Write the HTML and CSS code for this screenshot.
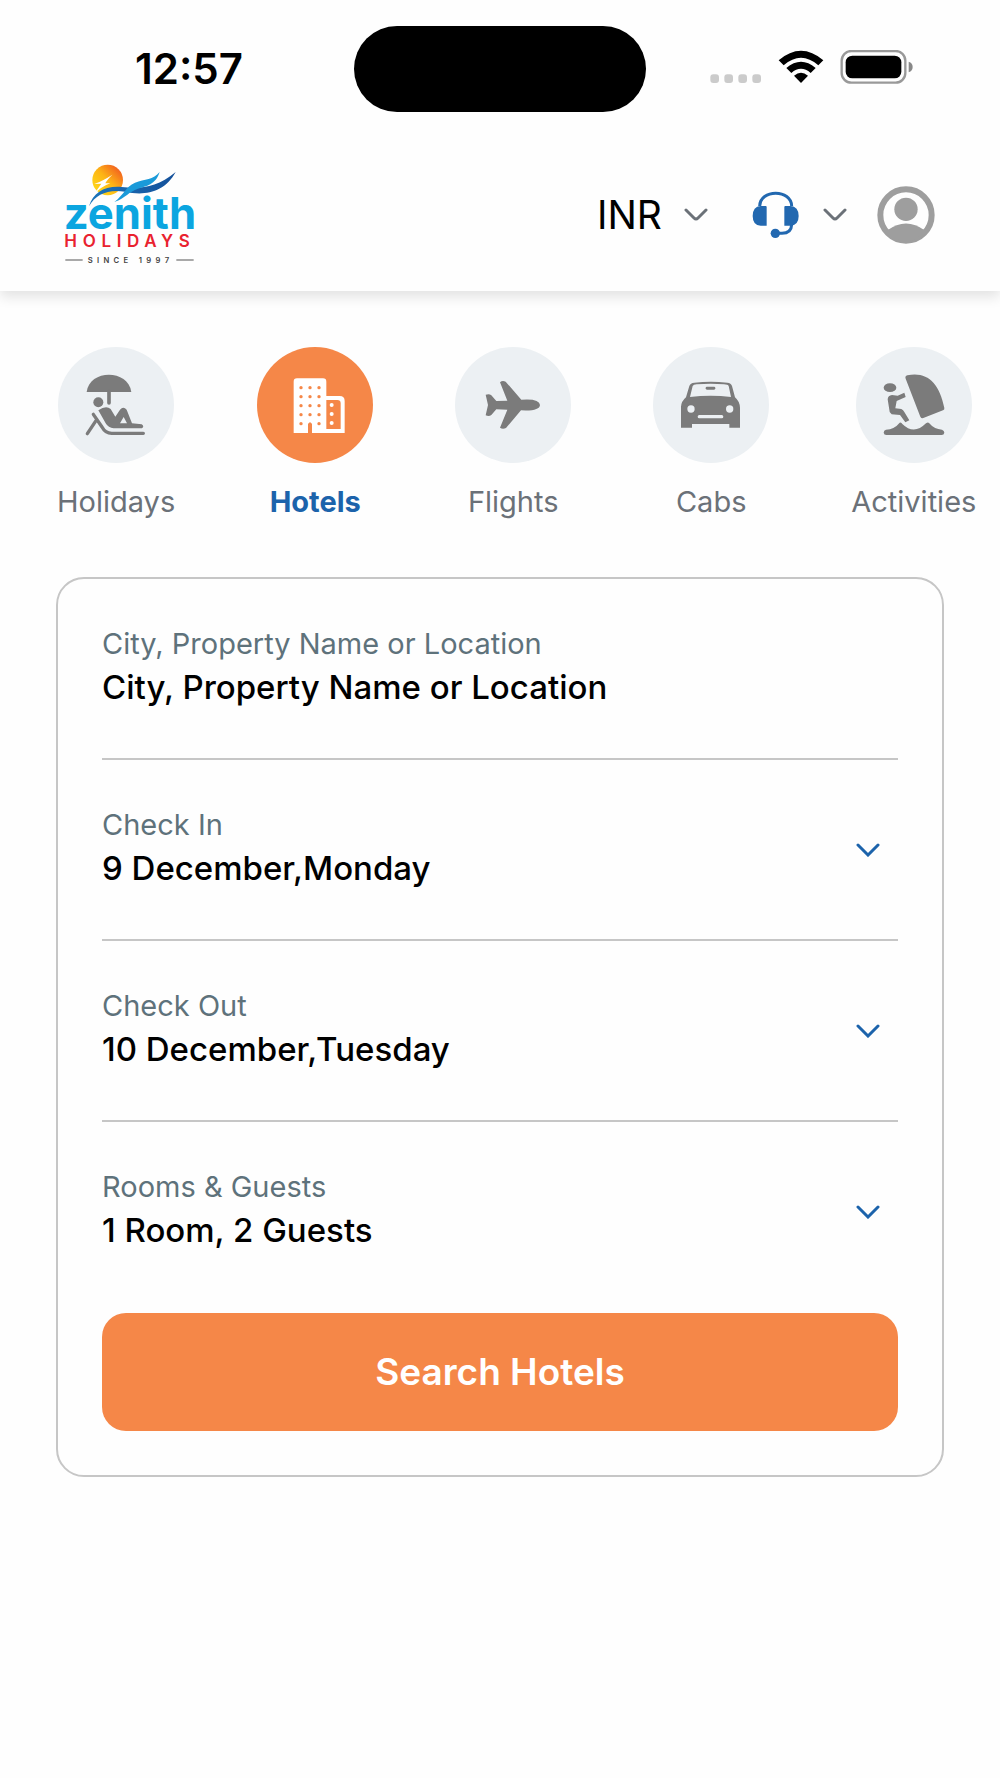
FILE: index.html
```html
<!DOCTYPE html>
<html lang="en">
<head>
<meta charset="utf-8">
<meta name="viewport" content="width=device-width, initial-scale=1">
<title>Zenith Holidays - Hotels</title>
<link rel="stylesheet" href="styles.css">
</head>
<body>
<div class="top">
  <div class="status">
    <time class="status-time">12:57</time>
    <div class="island"></div>
    <div class="status-icons">
      <svg width="52" height="34" viewBox="91 90 156 102" fill="#cbcbcb" aria-hidden="true"><rect x="92" y="163" width="26" height="26" rx="9"/><rect x="134" y="163" width="26" height="26" rx="9"/><rect x="176" y="163" width="26" height="26" rx="9"/><rect x="218" y="163" width="26" height="26" rx="9"/></svg>
      <svg width="46" height="34" viewBox="294 90 138 102" aria-hidden="true"><path d="M296 121Q363 64 430 121L415 136Q363 91 311 136Z"/><path d="M319 144Q363 106 407 144L392 159Q363 134 334 159Z"/><path d="M342 167Q363 150 384 167L363 189Z"/></svg>
      <svg width="73" height="34" viewBox="481 90 219 102" aria-hidden="true"><rect x="486" y="93" width="191" height="95" rx="29" fill="none" stroke="#999" stroke-width="7"/><rect x="498" y="107" width="167" height="68" rx="20"/><path d="M687 125Q699 129 699 141T687 157Z" fill="#888"/></svg>
    </div>
  </div>
  <header class="header">
    <a class="logo" href="#" aria-label="Zenith Holidays">
      <svg width="132" height="102" viewBox="42 40 396 306">
        <defs>
          <linearGradient id="sun" x1="0" y1="1" x2="1" y2="0"><stop offset="0" stop-color="#ffe21a"/><stop offset=".5" stop-color="#fdb515"/><stop offset="1" stop-color="#ee4423"/></linearGradient>
          <linearGradient id="wave" x1="0" y1="0" x2="1" y2="0"><stop offset="0" stop-color="#1b75bb"/><stop offset="1" stop-color="#15509a"/></linearGradient>
        </defs>
        <circle cx="173" cy="91" r="46" fill="url(#sun)"/>
        <path d="M133 103Q158 94 187 75Q171 90 166 101L181 101Q151 111 128 139Q143 118 154 102Z" fill="#fff"/>
        <path d="M117 170C130 128 164 108 215 112C270 118 319 115 377 67C343 130 282 139 225 126C176 118 138 132 117 170Z" fill="url(#wave)"/>
        <path d="M193 157C223 133 226 113 255 99C284 88 310 91 329 67C317 106 288 109 264 117C237 125 227 145 193 157Z" fill="#1a9ad9"/>
        <text class="logo-name" x="41" y="237">zenith</text>
        <text class="logo-sub" x="43" y="292">HOLIDAYS</text>
        <path d="M46 331H98M379 331H431" stroke="#555" stroke-width="3"/>
        <text class="logo-since" x="113" y="339">SINCE 1997</text>
      </svg>
    </a>
    <div class="actions">
      <label class="currency">
        <select class="currency-select" aria-label="Currency"><option>INR</option></select>
        <svg class="chevron" width="24" height="14" viewBox="0 0 24 14" aria-hidden="true"><path d="M2 2L10 10Q12 12 14 10L22 2"/></svg>
      </label>
      <button class="support" type="button" aria-label="Support">
        <svg width="47" height="48" viewBox="574 91 141 144" fill="#2268b0" aria-hidden="true"><path d="M597 137C597 85 693 85 693 137M693 192Q692 218 664 218H645" fill="none" stroke="#2268b0" stroke-width="9"/><path d="M618 139V195H600Q576 194 576 166T600 136H615Q618 136 618 139ZM671 139V195H689Q714 194 714 166T689 136H674Q671 136 671 139Z"/><circle cx="644" cy="218" r="14"/></svg>
        <svg class="chevron" width="24" height="14" viewBox="0 0 24 14" aria-hidden="true"><path d="M2 2L10 10Q12 12 14 10L22 2"/></svg>
      </button>
      <button class="profile" type="button" aria-label="Profile">
        <svg width="58" height="58" viewBox="949 78 174 174" fill="#9e9e9e" aria-hidden="true"><circle cx="1036" cy="165" r="77" fill="none" stroke="#9e9e9e" stroke-width="18"/><circle cx="1036" cy="148" r="35"/><path d="M980 211Q1036 170 1092 211Q1068 244 1036 244T980 211Z"/></svg>
      </button>
    </div>
  </header>
</div>
<main>
  <nav class="tabs" aria-label="Services">
    <a class="tab" href="#">
      <svg class="tab-icon" viewBox="51 51 348 348" aria-hidden="true"><path d="M137 186C145 117 262 117 271 186Z"/><circle cx="172" cy="217" r="15"/><path d="M204 184V219" class="line" stroke-width="11"/><path d="M172 241Q195 225 209 237L223 260L237 239Q247 227 257 239L273 280L302 283Q311 289 303 295H218Q202 294 194 280ZM237 280H258L248 261Z" fill-rule="evenodd"/><path d="M157 253L183 291Q193 310 212 310H307M165 272L139 311" class="line" stroke-width="10"/></svg>
      <span>Holidays</span>
    </a>
    <a class="tab tab-active" href="#" aria-current="page">
      <svg class="tab-icon" viewBox="647 51 348 348" aria-hidden="true"><path d="M757 309V155Q757 145 767 145H845Q855 145 855 155V198H895Q910 198 910 213V309H812V282Q806 272 800 282V309ZM855 210V297H898V220Q898 210 888 210Z" fill-rule="evenodd"/><g class="windows"><circle cx="779" cy="173" r="5"/><circle cx="806" cy="173" r="5"/><circle cx="833" cy="173" r="5"/><circle cx="779" cy="200" r="5"/><circle cx="806" cy="200" r="5"/><circle cx="833" cy="200" r="5"/><circle cx="779" cy="227" r="5"/><circle cx="806" cy="227" r="5"/><circle cx="833" cy="227" r="5"/><circle cx="779" cy="254" r="5"/><circle cx="806" cy="254" r="5"/><circle cx="833" cy="254" r="5"/><circle cx="779" cy="281" r="5"/><circle cx="833" cy="281" r="5"/></g><circle cx="871" cy="225" r="6"/><circle cx="871" cy="252" r="6"/><circle cx="871" cy="279" r="6"/></svg>
      <span>Hotels</span>
    </a>
    <a class="tab" href="#">
      <svg class="tab-icon" viewBox="40 51 348 348" aria-hidden="true"><path d="M132 194Q143 190 149 196L164 213L197 212L175 157Q182 150 192 155L239 209Q294 205 295 225Q294 244 238 241L193 294Q183 299 175 293L197 239L164 238L149 255Q142 261 132 256L139 225Z"/></svg>
      <span>Flights</span>
    </a>
    <a class="tab" href="#">
      <svg class="tab-icon" viewBox="633 51 348 348" aria-hidden="true"><path d="M717 293V230Q718 214 732 202L742 168Q745 159 757 158Q806 153 856 158Q867 159 870 168L879 202Q893 214 894 233V293H862V282H750V293ZM752 168L744 201Q806 193 867 201L860 168Q858 163 846 163Q806 159 764 163Q754 164 752 168Z" fill-rule="evenodd"/><rect x="791" y="170" width="29" height="9" rx="4"/><g class="lights"><circle cx="747" cy="237" r="11"/><circle cx="863" cy="237" r="11"/><rect x="767" y="255" width="77" height="10" rx="5"/></g></svg>
      <span>Cabs</span>
    </a>
    <a class="tab" href="#">
      <svg class="tab-icon" viewBox="103 51 348 348" aria-hidden="true"><ellipse cx="205" cy="173" rx="19" ry="13"/><path d="M252 146Q249 139 257 136C316 124 353 158 368 234Q369 239 364 241L305 264Q299 266 296 260Z"/><path d="M248 188L252 201L225 213L221 235L239 237Q245 240 248 246L263 271L251 277L235 255L210 253Q202 248 203 239L198 208Q199 196 211 195L228 197Z"/><path d="M193 299Q218 298 234 278Q239 276 242 282Q277 316 313 280Q319 275 322 279Q338 298 361 299Q368 302 368 308Q367 315 360 315H194Q187 315 186 308Q186 301 193 299Z"/></svg>
      <span>Activities</span>
    </a>
  </nav>
  <form class="card">
    <div class="field">
      <label class="field-label" for="place">City, Property Name or Location</label>
      <input class="field-value" id="place" type="text" placeholder="City, Property Name or Location">
    </div>
    <div class="field">
      <label class="field-label" for="check-in">Check In</label>
      <select class="field-value" id="check-in"><option>9 December,Monday</option></select>
      <svg class="chevron field-chevron" width="24" height="14" viewBox="0 0 24 14" aria-hidden="true"><path d="M2 2L12 12L22 2"/></svg>
    </div>
    <div class="field">
      <label class="field-label" for="check-out">Check Out</label>
      <select class="field-value" id="check-out"><option>10 December,Tuesday</option></select>
      <svg class="chevron field-chevron" width="24" height="14" viewBox="0 0 24 14" aria-hidden="true"><path d="M2 2L12 12L22 2"/></svg>
    </div>
    <div class="field">
      <label class="field-label" for="guests">Rooms &amp; Guests</label>
      <select class="field-value" id="guests"><option>1 Room, 2 Guests</option></select>
      <svg class="chevron field-chevron" width="24" height="14" viewBox="0 0 24 14" aria-hidden="true"><path d="M2 2L12 12L22 2"/></svg>
    </div>
    <button class="search" type="submit">Search Hotels</button>
  </form>
</main>
</body>
</html>
```
FILE: styles.css
```css
* { box-sizing: border-box; }

body {
  margin: 0;
  background: #fefefe;
  color: #000;
  font-family: Inter, "Liberation Sans", sans-serif;
}

svg { display: block; flex: none; }

button, select, input {
  margin: 0;
  padding: 0;
  border: 0;
  background: none;
  color: inherit;
  font: inherit;
  appearance: none;
}

.top { box-shadow: 0 6px 12px rgba(0, 0, 0, 0.11); }

/* Phone status bar */
.status {
  display: grid;
  grid-template-columns: 1fr auto 1fr;
  align-items: center;
  padding: 26px 0 20px;
}
.status-time {
  padding-left: 24px;
  text-align: center;
  font-size: 42px;
  font-weight: 600;
  line-height: 48px;
}
.island {
  width: 292px;
  height: 86px;
  border-radius: 43px;
  background: #000;
}
.status-icons {
  display: flex;
  justify-content: flex-end;
  gap: 16px;
  padding: 0 87px 4px 0;
}

/* App header */
.header {
  display: flex;
  align-items: center;
  justify-content: space-between;
  padding: 31px 65px 26px 64px;
}
.logo-name { fill: #0ba5e0; font-size: 131px; font-weight: 700; }
.logo-sub { fill: #e9222f; font-size: 51px; font-weight: 600; letter-spacing: 17px; }
.logo-since { fill: #444; font-size: 23px; font-weight: 600; letter-spacing: 13px; }
.actions { display: flex; align-items: center; gap: 30px; padding-top: 2px; }
.currency, .support { display: flex; align-items: center; gap: 24px; }
.currency { gap: 22px; margin-right: 14px; }
.currency-select { font-size: 39px; line-height: 48px; }
.chevron {
  fill: none;
  stroke: #6b7178;
  stroke-width: 3;
  stroke-linecap: round;
}

/* Service tabs */
.tabs {
  display: flex;
  gap: 82px;
  padding: 56px 0 57px 57px;
  overflow: hidden;
}
.tab {
  display: flex;
  flex: none;
  flex-direction: column;
  align-items: center;
  gap: 21px;
  min-width: 116px;
  color: #6b7178;
  text-decoration: none;
  font-size: 29px;
  line-height: 36px;
}
.tab-icon {
  width: 116px;
  height: 116px;
  border-radius: 50%;
  background: #ecf0f3;
  fill: #7b7b7b;
}
.line { fill: none; stroke: #7b7b7b; stroke-linecap: round; stroke-linejoin: round; }
.lights { fill: #ecf0f3; }
.tab-active { color: #1c63ab; font-weight: 700; }
.tab-active .tab-icon { background: #f58748; fill: #fff; }
.windows { fill: #f58748; }

/* Search form */
.card {
  margin: 0 56px;
  padding: 0 44px 44px;
  border: 2px solid #c6c6c6;
  border-radius: 28px;
}
.field {
  display: grid;
  grid-template-columns: 1fr auto;
  align-items: center;
  padding: 47px 0 46px;
  border-bottom: 2px solid #c6c6c6;
}
.field:nth-child(4) { border-bottom: 0; }
.field-label {
  color: #5e727b;
  font-size: 29px;
  line-height: 36px;
}
.field-value {
  grid-row: 2;
  grid-column: 1;
  width: 100%;
  height: 50px;
  font-size: 33px;
  line-height: 50px;
  font-weight: 500;
}
.field-value::placeholder { color: #000; opacity: 1; }
.field-chevron {
  grid-row: 1 / 3;
  grid-column: 2;
  margin-right: 18px;
  stroke: #1c63ab;
}
.search {
  display: block;
  width: 100%;
  margin-top: 12px;
  padding: 36px;
  border-radius: 24px;
  background: #f58748;
  color: #fff;
  font-size: 37px;
  font-weight: 600;
  line-height: 46px;
}
```
